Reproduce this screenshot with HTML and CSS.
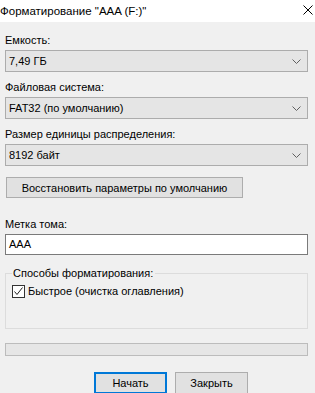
FILE: index.html
```html
<!DOCTYPE html>
<html lang="ru">
<head>
<meta charset="utf-8">
<title>Форматирование</title>
<link rel="stylesheet" href="styles.css">
</head>
<body>
<div class="titlebar">
  <span class="title">Форматирование "AAA (F:)"</span>
  <svg class="close" width="10" height="10" viewBox="0 0 10 10"><path d="M0.5 0.5 L9.5 9.5 M9.5 0.5 L0.5 9.5" stroke="#000" stroke-width="1" fill="none"/></svg>
</div>
<main class="content">
  <div class="lbl">Емкость:</div>
  <div class="combo"><span>7,49 ГБ</span><svg class="chev" width="9" height="5" viewBox="0 0 9 5"><path d="M0.5 0.5 L4.5 4.5 L8.5 0.5" stroke="#606060" fill="none"/></svg></div>
  <div class="lbl">Файловая система:</div>
  <div class="combo"><span>FAT32 (по умолчанию)</span><svg class="chev" width="9" height="5" viewBox="0 0 9 5"><path d="M0.5 0.5 L4.5 4.5 L8.5 0.5" stroke="#606060" fill="none"/></svg></div>
  <div class="lbl">Размер единицы распределения:</div>
  <div class="combo"><span>8192 байт</span><svg class="chev" width="9" height="5" viewBox="0 0 9 5"><path d="M0.5 0.5 L4.5 4.5 L8.5 0.5" stroke="#606060" fill="none"/></svg></div>
  <button class="btn wide">Восстановить параметры по умолчанию</button>
  <div class="lbl lbl-gap">Метка тома:</div>
  <div class="textbox">AAA</div>
  <fieldset class="group">
    <legend>Способы форматирования:</legend>
    <div class="check">
      <span class="box"><svg width="11" height="11" viewBox="0 0 11 11"><path d="M1.5 5.5 L4 8.5 L9.5 1.5" stroke="#222" stroke-width="1" fill="none"/></svg></span>
      <span>Быстрое (очистка оглавления)</span>
    </div>
  </fieldset>
  <div class="progress"></div>
  <div class="actions">
    <button class="btn primary">Начать</button>
    <button class="btn">Закрыть</button>
  </div>
</main>
</body>
</html>
```
FILE: styles.css
```css
* { box-sizing: border-box; }
html, body { margin: 0; padding: 0; }
body {
  background: #f0f0f0;
  font-family: "Liberation Sans", Arial, sans-serif;
  font-size: 11px;
  color: #000;
  width: 315px;
  height: 393px;
  overflow: hidden;
  white-space: nowrap;
}
.titlebar {
  height: 22px;
  background: #fff;
  display: flex;
  align-items: center;
  justify-content: space-between;
  padding: 0 2px 0 0;
  font-size: 11.5px;
}
.title { line-height: 15px; }
.close { margin-top: -3px; }
.content {
  padding: 0 7px 0 5px;
  display: flex;
  flex-direction: column;
}
.lbl {
  line-height: 15px;
  height: 15px;
  margin-top: 8px;
  margin-bottom: 2px;
}
.content > .lbl:first-child { margin-top: 11px; }
.lbl-gap { margin-top: 19px; }
.combo {
  height: 22px;
  background: #e5e5e5;
  border: 1px solid #acacac;
  display: flex;
  align-items: center;
  justify-content: space-between;
  padding: 0 6px 0 3px;
}
.btn {
  font: inherit;
  color: #000;
  background: #e1e1e1;
  border: 1px solid #adadad;
  height: 21px;
  padding: 0;
  margin: 0;
}
.wide {
  width: 237px;
  margin-top: 11px;
  margin-left: 1px;
  align-self: flex-start;
}
.textbox {
  height: 21px;
  background: #fff;
  border: 1px solid #7a7a7a;
  padding: 0 3px;
  line-height: 19px;
}
.group {
  margin: 11px 0 0 0;
  padding: 0 0 0 6px;
  border: 1px solid #dcdcdc;
  height: 63px;
  min-width: 0;
}
.group legend {
  padding: 0 2px 0 1px;
  margin-left: 0;
  line-height: 15px;
}
.check {
  display: flex;
  align-items: center;
  gap: 3px;
  margin-top: 3px;
  line-height: 15px;
}
.box {
  width: 13px;
  height: 13px;
  border: 1px solid #333;
  background: #fff;
  display: flex;
  align-items: center;
  justify-content: center;
}
.progress {
  margin-top: 14px;
  height: 13px;
  background: #e6e6e6;
  border: 1px solid #bcbcbc;
}
.actions {
  display: flex;
  gap: 8px;
  margin-top: 16px;
  padding-left: 89px;
}
.actions .btn { width: 73px; height: 22px; }
.primary {
  border: 2px solid #0078d7;
}
```
